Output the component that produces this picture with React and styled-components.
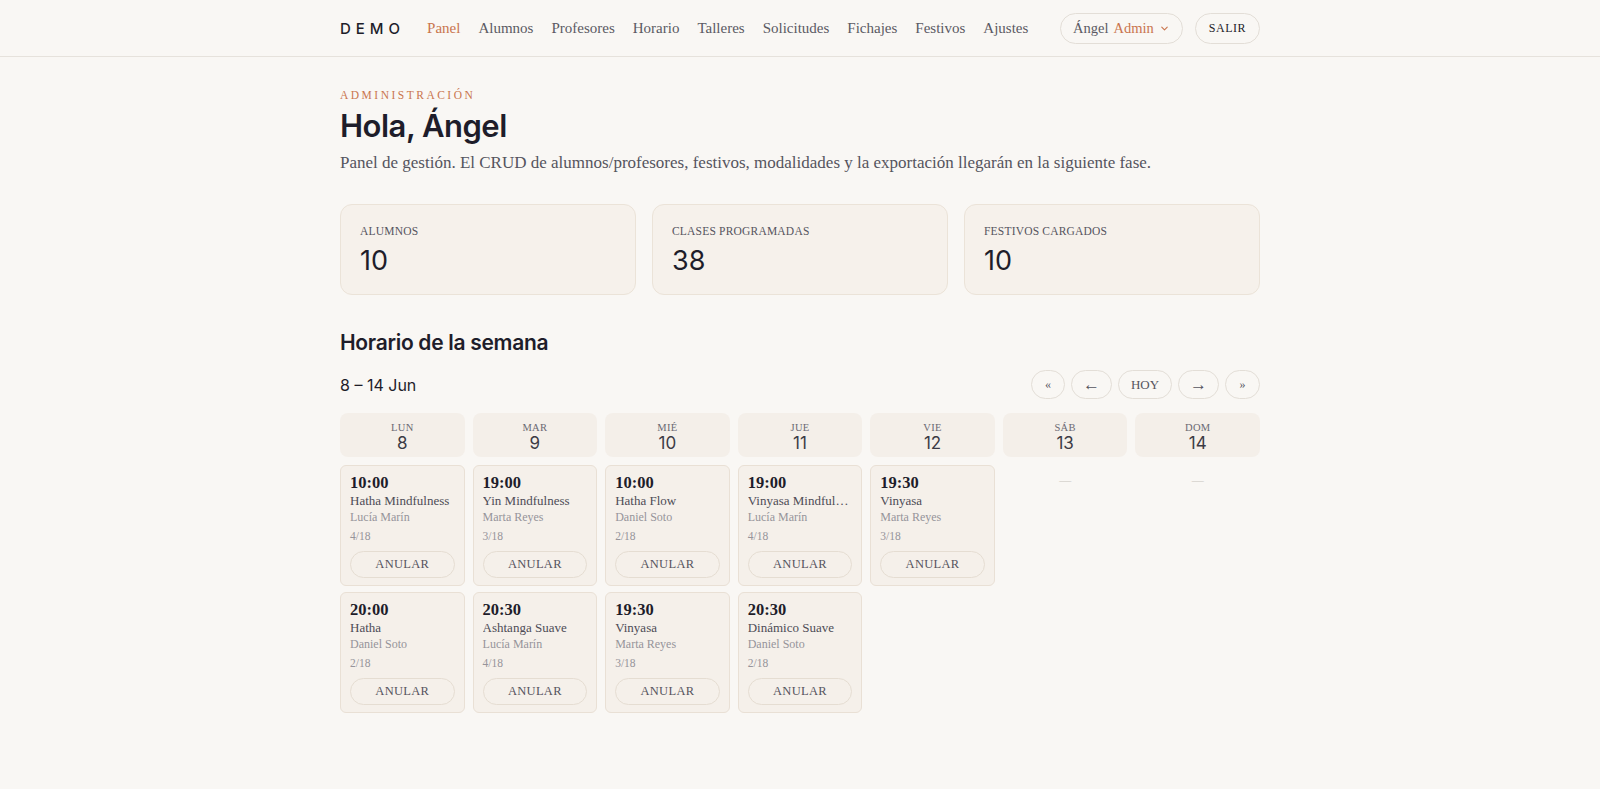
import React from 'react'
import styled, { createGlobalStyle } from 'styled-components'

const GlobalStyle = createGlobalStyle`
  * { box-sizing: border-box; }
  body {
    margin: 0;
    background: #f9f7f4;
    color: #1e1d2a;
    font-family: 'Liberation Serif', serif;
  }
`

const serif = `'Liberation Serif', 'DejaVu Serif', serif`
const sans = `Inter, 'Noto Sans', sans-serif`
const accent = '#c9754e'

const Header = styled.header`
  height: 57px;
  border-bottom: 1px solid #e6e2dc;
`

const Container = styled.div`
  width: 920px;
  margin: 0 auto;
`

const HeaderInner = styled(Container)`
  display: flex;
  align-items: center;
  height: 100%;
`

const Logo = styled.div`
  font-family: ${sans};
  font-size: 15px;
  font-weight: 500;
  letter-spacing: 5px;
  color: #1e1d2a;
  margin-right: 22px;
`

const Nav = styled.nav`
  display: flex;
  gap: 18px;
`

const NavLink = styled.a`
  font-family: ${serif};
  font-size: 15px;
  color: ${p => (p.$active ? accent : '#5b5a63')};
  text-decoration: none;
`

const Pill = styled.button`
  height: 31px;
  border-radius: 16px;
  border: 1px solid #e3ded7;
  background: transparent;
  font-family: ${serif};
  display: flex;
  align-items: center;
  gap: 5px;
  color: #1e1d2a;
`

const UserPill = styled(Pill)`
  font-size: 14.5px;
  margin-left: auto;
  margin-right: 12px;
  padding: 0 12px;
  color: #5b5a63;
  span { color: ${accent}; }
`

const Salir = styled(Pill)`
  font-size: 12px;
  letter-spacing: 0.5px;
  padding: 0 13px;
`

const Main = styled(Container)`
  padding-top: 32px;
  padding-bottom: 80px;
`

const Eyebrow = styled.div`
  font-family: ${serif};
  font-size: 11.5px;
  letter-spacing: 2.5px;
  color: ${accent};
`

const Title = styled.h1`
  font-family: ${sans};
  font-size: 31px;
  font-weight: 600;
  letter-spacing: -0.5px;
  margin: 5px 0 0;
  line-height: 40px;
`

const Lead = styled.p`
  font-family: ${serif};
  font-size: 17px;
  color: #55545e;
  margin: 7px 0 0;
`

const Stats = styled.div`
  display: grid;
  grid-template-columns: repeat(3, minmax(0, 1fr));
  gap: 16px;
  margin-top: 31px;
`

const StatCard = styled.div`
  height: 91px;
  border: 1px solid #ebe3d8;
  background: #f6f1eb;
  border-radius: 12px;
  padding: 20px 19px;
`

const StatLabel = styled.div`
  font-family: ${serif};
  font-size: 11.5px;
  color: #55545e;
  letter-spacing: 0.2px;
`

const StatValue = styled.div`
  font-family: ${sans};
  font-size: 27px;
  margin-top: 7px;
  color: #1e1d2a;
`

const SectionTitle = styled.h2`
  font-family: ${sans};
  font-size: 21px;
  font-weight: 600;
  margin: 35px 0 0;
  letter-spacing: -0.3px;
`

const WeekBar = styled.div`
  display: flex;
  align-items: center;
  justify-content: space-between;
  margin-top: 15px;
`

const WeekLabel = styled.div`
  font-family: ${sans};
  font-size: 16px;
`

const Controls = styled.div`
  display: flex;
  gap: 6px;
`

const Ctrl = styled.button`
  height: 29px;
  min-width: ${p => p.$w}px;
  border-radius: 15px;
  border: 1px solid #e3ded7;
  background: transparent;
  font-family: ${serif};
  font-size: ${p => p.$fs || 13}px;
  color: #55545e;
  padding: 0;
`

const Week = styled.div`
  display: grid;
  grid-template-columns: repeat(7, minmax(0, 1fr));
  gap: 8px;
  margin-top: 14px;
`

const Column = styled.div`
  display: flex;
  flex-direction: column;
  gap: 6px;
  min-width: 0;
`

const DayHead = styled.div`
  height: 44px;
  background: #f4efe9;
  border-radius: 8px;
  display: flex;
  flex-direction: column;
  align-items: center;
  justify-content: center;
  padding-top: 4px;
  margin-bottom: 2px;
`

const DayName = styled.div`
  font-family: ${serif};
  font-size: 10.5px;
  color: #6a6972;
  letter-spacing: 0.3px;
`

const DayNum = styled.div`
  font-family: ${sans};
  font-size: 17px;
  color: #3c3b45;
`

const Empty = styled.div`
  text-align: center;
  color: #c9c5bf;
  font-size: 12px;
  margin-top: 8px;
`

const ClassCard = styled.div`
  height: 121px;
  border: 1px solid #e9e0d5;
  background: #f5f0ea;
  border-radius: 6px;
  padding: 7px 9px 0;
  display: flex;
  flex-direction: column;
`

const Time = styled.div`
  font-family: ${serif};
  font-size: 16.5px;
  font-weight: 600;
  color: #1e1d2a;
  line-height: 20px;
`

const ClassName = styled.div`
  font-family: ${serif};
  font-size: 13px;
  color: #4d4c56;
  white-space: nowrap;
  overflow: hidden;
  text-overflow: ellipsis;
  line-height: 16px;
`

const Teacher = styled.div`
  font-family: ${serif};
  font-size: 12px;
  color: #96949a;
  margin-top: 1px;
  line-height: 15px;
`

const Count = styled.div`
  font-family: ${serif};
  font-size: 11.5px;
  color: #96949a;
  margin-top: 4px;
  line-height: 15px;
`

const Cancel = styled.button`
  margin-top: 7px;
  height: 27px;
  border-radius: 14px;
  border: 1px solid #e5ddd2;
  background: transparent;
  font-family: ${serif};
  font-size: 12.5px;
  letter-spacing: 0.3px;
  color: #55545e;
`

const Chevron = () => (
  <svg width="11" height="11" viewBox="0 0 24 24" fill="none" stroke={accent} strokeWidth="2.4" strokeLinecap="round" strokeLinejoin="round">
    <path d="M6 9l6 6 6-6" />
  </svg>
)

const navItems = ['Panel', 'Alumnos', 'Profesores', 'Horario', 'Talleres', 'Solicitudes', 'Fichajes', 'Festivos', 'Ajustes']

const days = [
  { name: 'LUN', num: 8, classes: [
    ['10:00', 'Hatha Mindfulness', 'Lucía Marín', '4/18'],
    ['20:00', 'Hatha', 'Daniel Soto', '2/18'],
  ] },
  { name: 'MAR', num: 9, classes: [
    ['19:00', 'Yin Mindfulness', 'Marta Reyes', '3/18'],
    ['20:30', 'Ashtanga Suave', 'Lucía Marín', '4/18'],
  ] },
  { name: 'MIÉ', num: 10, classes: [
    ['10:00', 'Hatha Flow', 'Daniel Soto', '2/18'],
    ['19:30', 'Vinyasa', 'Marta Reyes', '3/18'],
  ] },
  { name: 'JUE', num: 11, classes: [
    ['19:00', 'Vinyasa Mindfulness', 'Lucía Marín', '4/18'],
    ['20:30', 'Dinámico Suave', 'Daniel Soto', '2/18'],
  ] },
  { name: 'VIE', num: 12, classes: [
    ['19:30', 'Vinyasa', 'Marta Reyes', '3/18'],
  ] },
  { name: 'SÁB', num: 13, classes: [] },
  { name: 'DOM', num: 14, classes: [] },
]

const stats = [
  ['ALUMNOS', 10],
  ['CLASES PROGRAMADAS', 38],
  ['FESTIVOS CARGADOS', 10],
]

export default function App() {
  return (
    <>
      <GlobalStyle />
      <Header>
        <HeaderInner>
          <Logo>DEMO</Logo>
          <Nav>
            {navItems.map((n, i) => (
              <NavLink key={n} $active={i === 0}>{n}</NavLink>
            ))}
          </Nav>
          <UserPill>Ángel <span>Admin</span> <Chevron /></UserPill>
          <Salir>SALIR</Salir>
        </HeaderInner>
      </Header>
      <Main>
        <Eyebrow>ADMINISTRACIÓN</Eyebrow>
        <Title>Hola, Ángel</Title>
        <Lead>Panel de gestión. El CRUD de alumnos/profesores, festivos, modalidades y la exportación llegarán en la siguiente fase.</Lead>
        <Stats>
          {stats.map(([l, v]) => (
            <StatCard key={l}>
              <StatLabel>{l}</StatLabel>
              <StatValue>{v}</StatValue>
            </StatCard>
          ))}
        </Stats>
        <SectionTitle>Horario de la semana</SectionTitle>
        <WeekBar>
          <WeekLabel>8 – 14 Jun</WeekLabel>
          <Controls>
            <Ctrl $w={34} $fs={12}>«</Ctrl>
            <Ctrl $w={41} $fs={17}>←</Ctrl>
            <Ctrl $w={54}>HOY</Ctrl>
            <Ctrl $w={41} $fs={17}>→</Ctrl>
            <Ctrl $w={35} $fs={12}>»</Ctrl>
          </Controls>
        </WeekBar>
        <Week>
          {days.map(d => (
            <Column key={d.name}>
              <DayHead>
                <DayName>{d.name}</DayName>
                <DayNum>{d.num}</DayNum>
              </DayHead>
              {d.classes.length === 0 && <Empty>—</Empty>}
              {d.classes.map(([t, n, p, c]) => (
                <ClassCard key={t + n}>
                  <Time>{t}</Time>
                  <ClassName>{n}</ClassName>
                  <Teacher>{p}</Teacher>
                  <Count>{c}</Count>
                  <Cancel>ANULAR</Cancel>
                </ClassCard>
              ))}
            </Column>
          ))}
        </Week>
      </Main>
    </>
  )
}
